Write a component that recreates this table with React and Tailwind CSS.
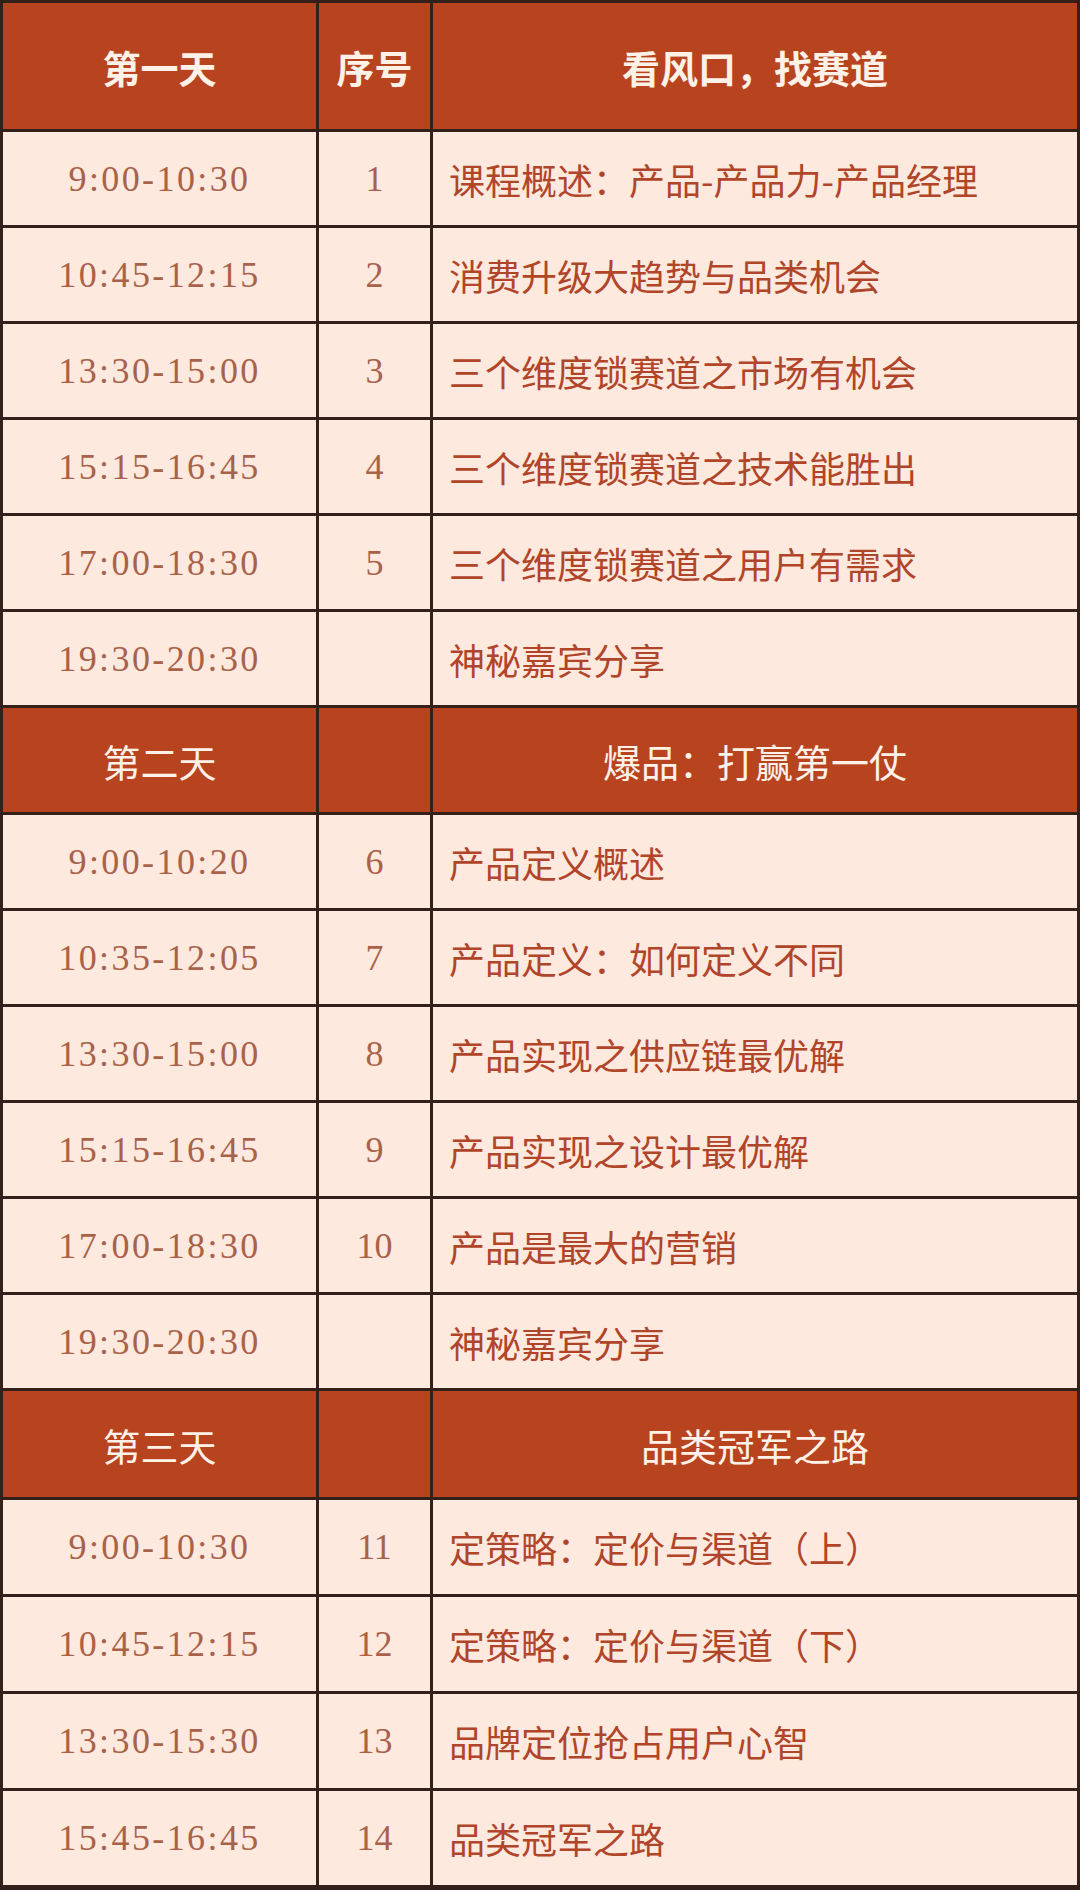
import React from "react";

const sections = [
  {
    day: "第一天",
    no: "序号",
    title: "看风口，找赛道",
    bold: true,
    h: "h-[126px]",
    rowH: "h-[93px]",
    rows: [
      ["9:00-10:30", "1", "课程概述：产品-产品力-产品经理"],
      ["10:45-12:15", "2", "消费升级大趋势与品类机会"],
      ["13:30-15:00", "3", "三个维度锁赛道之市场有机会"],
      ["15:15-16:45", "4", "三个维度锁赛道之技术能胜出"],
      ["17:00-18:30", "5", "三个维度锁赛道之用户有需求"],
      ["19:30-20:30", "", "神秘嘉宾分享"],
    ],
  },
  {
    day: "第二天",
    no: "",
    title: "爆品：打赢第一仗",
    bold: false,
    h: "h-[104px]",
    rowH: "h-[93px]",
    rows: [
      ["9:00-10:20", "6", "产品定义概述"],
      ["10:35-12:05", "7", "产品定义：如何定义不同"],
      ["13:30-15:00", "8", "产品实现之供应链最优解"],
      ["15:15-16:45", "9", "产品实现之设计最优解"],
      ["17:00-18:30", "10", "产品是最大的营销"],
      ["19:30-20:30", "", "神秘嘉宾分享"],
    ],
  },
  {
    day: "第三天",
    no: "",
    title: "品类冠军之路",
    bold: false,
    h: "h-[106px]",
    rowH: "h-[94px]",
    rows: [
      ["9:00-10:30", "11", "定策略：定价与渠道（上）"],
      ["10:45-12:15", "12", "定策略：定价与渠道（下）"],
      ["13:30-15:30", "13", "品牌定位抢占用户心智"],
      ["15:45-16:45", "14", "品类冠军之路"],
    ],
  },
];

function HeadCell({ children, bold }) {
  return (
    <div
      className={`bg-[#b8441f] flex items-center justify-center text-[38px] text-[#fdf1e8] font-['Noto_Sans_CJK_SC','Noto_Sans',sans-serif] ${
        bold ? "font-bold" : "font-normal"
      }`}
    >
      {children}
    </div>
  );
}

export default function App() {
  return (
    <div className="w-[1080px] h-[1890px] bg-[#34201a] pt-[3px] px-[3px] pb-[5px] flex flex-col gap-[3px] overflow-hidden">
      {sections.map((s, si) => (
        <React.Fragment key={si}>
          <div className={`grid grid-cols-[313px_111px_1fr] gap-[3px] ${s.h}`}>
            <HeadCell bold={s.bold}>{s.day}</HeadCell>
            <HeadCell bold={s.bold}>{s.no}</HeadCell>
            <HeadCell bold={s.bold}>{s.title}</HeadCell>
          </div>
          {s.rows.map((r, ri) => (
            <div key={ri} className={`grid grid-cols-[313px_111px_1fr] gap-[3px] ${s.rowH}`}>
              <div className="bg-[#fde9de] flex items-center justify-center text-[36px] tracking-[2.4px] text-[#a9624a] font-['Liberation_Serif','DejaVu_Serif',serif]">
                {r[0]}
              </div>
              <div className="bg-[#fde9de] flex items-center justify-center text-[36px] text-[#a9624a] font-['Liberation_Serif','DejaVu_Serif',serif]">
                {r[1]}
              </div>
              <div className="bg-[#fde9de] flex items-center pl-[16px] text-[36px] text-[#b0452a] font-['Noto_Sans_CJK_SC','Noto_Sans',sans-serif]">
                {r[2]}
              </div>
            </div>
          ))}
        </React.Fragment>
      ))}
    </div>
  );
}
